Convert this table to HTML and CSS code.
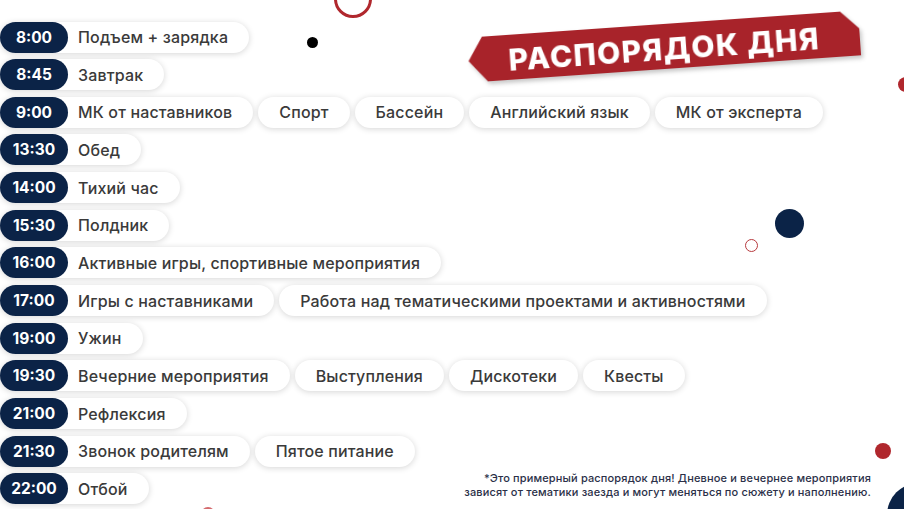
FILE: index.html
```html
<!DOCTYPE html>
<html lang="ru">
<head>
<meta charset="utf-8">
<title>Распорядок дня</title>
<link rel="stylesheet" href="styles.css">
</head>
<body>
<div class="page">
  <div class="schedule">
    <div class="row"><div class="pill main"><span class="time">8:00</span><span>Подъем + зарядка</span></div></div>
    <div class="row"><div class="pill main"><span class="time">8:45</span><span>Завтрак</span></div></div>
    <div class="row"><div class="pill main"><span class="time">9:00</span><span>МК от наставников</span></div><div class="pill">Спорт</div><div class="pill">Бассейн</div><div class="pill">Английский язык</div><div class="pill">МК от эксперта</div></div>
    <div class="row"><div class="pill main"><span class="time">13:30</span><span>Обед</span></div></div>
    <div class="row"><div class="pill main"><span class="time">14:00</span><span>Тихий час</span></div></div>
    <div class="row"><div class="pill main"><span class="time">15:30</span><span>Полдник</span></div></div>
    <div class="row"><div class="pill main"><span class="time">16:00</span><span>Активные игры, спортивные мероприятия</span></div></div>
    <div class="row"><div class="pill main"><span class="time">17:00</span><span>Игры с наставниками</span></div><div class="pill">Работа над тематическими проектами и активностями</div></div>
    <div class="row"><div class="pill main"><span class="time">19:00</span><span>Ужин</span></div></div>
    <div class="row"><div class="pill main"><span class="time">19:30</span><span>Вечерние мероприятия</span></div><div class="pill">Выступления</div><div class="pill">Дискотеки</div><div class="pill">Квесты</div></div>
    <div class="row"><div class="pill main"><span class="time">21:00</span><span>Рефлексия</span></div></div>
    <div class="row"><div class="pill main"><span class="time">21:30</span><span>Звонок родителям</span></div><div class="pill">Пятое питание</div></div>
    <div class="row"><div class="pill main"><span class="time">22:00</span><span>Отбой</span></div></div>
  </div>

  <div class="banner-wrap"><div class="banner"><span>РАСПОРЯДОК ДНЯ</span></div></div>

  <p class="note">*Это примерный распорядок дня! Дневное и вечернее мероприятия<br>зависят от тематики заезда и могут меняться по сюжету и наполнению.</p>

  <span class="dot ring-top"></span>
  <span class="dot black-dot"></span>
  <span class="dot red-edge"></span>
  <span class="dot navy-mid"></span>
  <span class="dot ring-small"></span>
  <span class="dot red-low"></span>
  <span class="dot navy-big"></span>
  <span class="dot red-bottom"></span>
</div>
</body>
</html>
```

FILE: styles.css
```css
* { box-sizing: border-box; }
html, body { margin: 0; padding: 0; background: #fff; }
body { font-family: "Inter", "Noto Sans", sans-serif; color: #333; }

.page {
  position: relative;
  width: 904px;
  height: 509px;
  overflow: hidden;
  display: grid;
  grid-template: 1fr / 1fr;
}
.page > .schedule, .page > .banner-wrap, .page > .note { grid-area: 1 / 1; }

.schedule {
  display: flex;
  flex-direction: column;
  gap: 6.67px;
  padding-top: 21.5px;
}
.row { display: flex; gap: 5px; }

.pill {
  height: 31px;
  display: flex;
  align-items: center;
  padding: 0 21px;
  background: #fff;
  border-radius: 16px;
  box-shadow: 0 1px 6px rgba(0,0,0,0.17);
  font-size: 16px;
  font-weight: 500;
  letter-spacing: 0.15px;
  color: #3a3a3a;
  white-space: nowrap;
}
.pill.main { padding-left: 0; }
.time {
  width: 68px;
  height: 31px;
  border-radius: 16px;
  background: #0b2347;
  color: #fff;
  font-weight: 700;
  font-size: 15.5px;
  letter-spacing: 0;
  display: flex;
  align-items: center;
  justify-content: center;
  margin-right: 10px;
}

.banner-wrap {
  justify-self: end;
  align-self: start;
  margin: 24px 44px 0 0;
  filter: drop-shadow(2px 3px 2px rgba(0,0,0,0.22));
  transform: rotate(-4deg);
}
.banner {
  width: 392px;
  height: 45px;
  background: #a8232a;
  clip-path: polygon(15px 0, calc(100% - 18px) 0, 100% 40%, 100% 100%, 18px 100%, 0 52%);
  display: flex;
  align-items: center;
  justify-content: center;
  padding-top: 4px;
}
.banner span {
  color: #fff;
  font-weight: 800;
  font-size: 30px;
  letter-spacing: 1.3px;
}

.note {
  justify-self: end;
  align-self: end;
  margin: 0 33px 10px 0;
  text-align: right;
  font-size: 11px;
  line-height: 14px;
  font-weight: 500;
  letter-spacing: 0.15px;
  color: #2b3048;
}

.dot { position: absolute; border-radius: 50%; display: block; }
.ring-top { left: 334px; top: -20px; width: 38px; height: 38px; border: 3px solid #b0272d; }
.black-dot { left: 306.5px; top: 36.5px; width: 11px; height: 11px; background: #000; }
.red-edge { left: 898px; top: 77px; width: 15px; height: 15px; background: #b0272d; }
.navy-mid { left: 775px; top: 208.5px; width: 29px; height: 29px; background: #0b2347; }
.ring-small { left: 745px; top: 238.5px; width: 13px; height: 13px; border: 1.5px solid #b73a3e; }
.red-low { left: 875px; top: 442.5px; width: 16px; height: 16px; background: #b0272d; }
.navy-big { left: 887px; top: 483px; width: 64px; height: 64px; background: #0b2347; }
.red-bottom { left: 201px; top: 507px; width: 14px; height: 14px; background: #d46a6d; }
```
